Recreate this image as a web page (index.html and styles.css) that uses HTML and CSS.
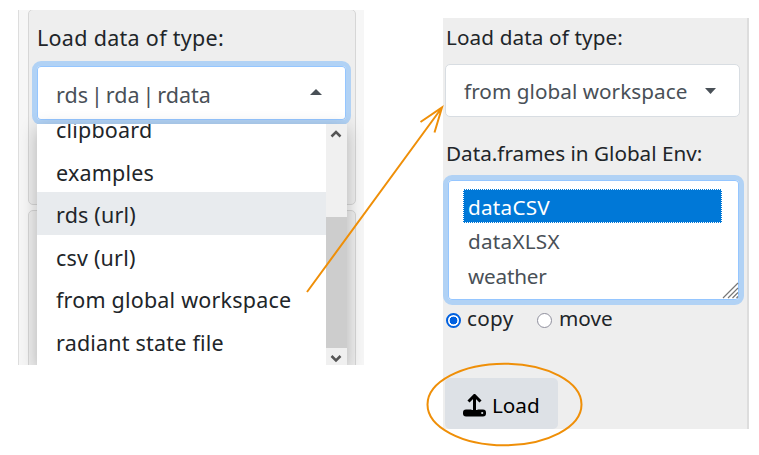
FILE: index.html
```html
<!DOCTYPE html>
<html lang="en">
<head>
<meta charset="utf-8">
<title>Load data</title>
<link rel="stylesheet" href="styles.css">
</head>
<body>
<main class="stage">
  <section class="source">
    <div class="well well-top">
      <div class="label"><span>Load data of type:</span></div>
      <div class="select focused">
        <span>rds | rda | rdata</span>
        <svg class="caret" width="12" height="6" viewBox="0 0 12 6"><path d="M0 6 6 0l6 6z"/></svg>
      </div>
    </div>
    <div class="well well-bottom"></div>
    <div class="menu">
      <ul class="options">
        <li><span>clipboard</span></li>
        <li><span>examples</span></li>
        <li class="active"><span>rds (url)</span></li>
        <li><span>csv (url)</span></li>
        <li><span>from global workspace</span></li>
        <li><span>radiant state file</span></li>
      </ul>
      <div class="scrollbar">
        <svg class="up" width="20" height="20" viewBox="0 0 20 20"><path d="m5.500 12.500 4.500-4.500 4.500 4.500"/></svg>
        <div class="thumb"></div>
        <svg width="20" height="17" viewBox="0 0 20 17"><path d="m5.500 8 4.500 4.500L14.500 8"/></svg>
      </div>
    </div>
  </section>
  <section class="target">
    <div class="label"><span>Load data of type:</span></div>
    <div class="select">
      <span>from global workspace</span>
      <svg class="caret" width="11" height="6" viewBox="0 0 11 6"><path d="M0 0h11L5.500 6z"/></svg>
    </div>
    <div class="label frames"><span>Data.frames in Global Env:</span></div>
    <div class="listbox">
      <div class="item selected"><span>dataCSV</span></div>
      <div class="item"><span>dataXLSX</span></div>
      <div class="item weather"><span>weather</span></div>
      <svg class="grip" width="17" height="17" viewBox="0 0 17 17"><path d="M1 16 16 1M6 16 16 6M10.500 16 16 10.500M14.500 16l1.500-1.500"/></svg>
    </div>
    <div class="radios">
      <i class="radio on"></i><span class="copy">copy</span>
      <i class="radio"></i><span class="move">move</span>
    </div>
    <div class="load">
      <svg width="23" height="23" viewBox="0 0 23 23"><rect x="0" y="15.500" width="23" height="7" rx="3"/><path class="halo" d="M11.500 16V4"/><path class="arrow" d="M11.500 17.500V2M5.500 7.500l6-6 6 6"/><circle cx="19.200" cy="19" r="1.100"/></svg>
      <span>Load</span>
    </div>
  </section>
  <svg class="notes" width="759" height="455" viewBox="0 0 759 455">
    <path d="M307 292 442 107.500M420.500 122 442 107.500 434.500 132.500"/>
    <ellipse cx="504.500" cy="404.500" rx="77" ry="40.800"/>
  </svg>
</main>
</body>
</html>
```
FILE: styles.css
```css
* { box-sizing: border-box; }
body { margin: 0; background: #fff; font-family: "Noto Sans", "Open Sans", sans-serif; color: #212529; white-space: nowrap; }
svg { display: block; flex: none; }
.stage { position: relative; display: flex; align-items: flex-start; gap: 79px; width: 759px; height: 455px; padding-left: 18px; overflow: hidden; }

.source { position: relative; width: 346px; height: 355px; margin-top: 10px; padding: 0 8px 0 9px; overflow: hidden; background: #f6f6f6; border-left: 1px solid #ddd; font-size: 21.500px; letter-spacing: 0.200px; }
.well { background: #eee; border: 1.500px solid #d6d6d6; border-radius: 5px; }
.well-top { height: 196px; margin-top: -1px; padding: 0 4px 0 3px; }
.well-bottom { height: 170px; margin-top: 5px; }
.source .label { height: 51px; padding-left: 5px; line-height: 55px; letter-spacing: 0.300px; }
.select { display: flex; align-items: center; justify-content: space-between; background: #fff; color: #495057; }
.caret { fill: #495057; }
.focused { height: 64px; padding: 2px 24px 0 19px; border: 5px solid #b1d2f5; border-radius: 9px; box-shadow: inset 0 0 0 1px #95c6ff; letter-spacing: 0; word-spacing: -2.600px; }
.focused .caret { margin-bottom: 5px; }

.menu { position: absolute; left: 18px; top: 114px; display: flex; width: 310px; height: 241px; overflow: hidden; background: #fff; box-shadow: 0 5px 16px rgba(0, 0, 0, .25); }
.options { flex: 1; margin: -17px 0 0; padding: 0; list-style: none; }
.options li { height: 42.600px; padding-left: 19px; line-height: 46.500px; }
.options .active { background: #e8ebee; }
.scrollbar { display: flex; flex-direction: column; width: 21px; background: #f0f0f0; }
.scrollbar path { fill: none; stroke: #555; stroke-width: 2.500; }
.scrollbar .up { margin-bottom: 73px; }
.thumb { height: 131px; background: #cdcdcd; }

.target { width: 306px; height: 411px; margin-top: 18px; padding: 0 7px 0 2px; background: #eee; border-right: 2px solid #ddd; font-size: 20.700px; }
.target .label { height: 46px; padding-left: 1px; line-height: 39px; letter-spacing: 0.120px; }
.target .select { height: 53px; padding: 0 23px 0 18px; border: 1px solid #d8dde2; border-radius: 5px; letter-spacing: 0.050px; }
.target .frames { height: 58px; line-height: 72px; letter-spacing: 0; }
.listbox { position: relative; width: 301px; height: 130px; margin-left: -2px; padding: 9px 17px 0 15px; background: #fff; border: 5px solid #b1d2f5; border-radius: 9px; box-shadow: inset 0 0 0 1px #95c6ff; color: #495057; }
.item { height: 34.300px; padding-left: 5px; line-height: 36px; letter-spacing: 0.250px; }
.weather { letter-spacing: -0.200px; }
.selected { background: #0078d7; color: #fff; outline: 1px dotted #fff; outline-offset: -1px; }
.grip { position: absolute; right: 0; bottom: 1px; fill: none; stroke: #777; stroke-width: 1.200; }
.radios { display: flex; align-items: center; height: 30px; padding-left: 1px; }
.radio { width: 15px; height: 15px; border: 1.500px solid #8f8f9d; border-radius: 50%; background: #fff; }
.on { border: 2px solid #0060df; background: radial-gradient(circle, #0060df 0 3.600px, #fff 4.200px); }
.copy { width: 76px; padding-left: 6px; letter-spacing: 0.300px; }
.move { padding-left: 7px; }
.copy, .move { margin-top: -5px; }
.load { display: flex; align-items: center; gap: 6px; width: 113px; height: 51px; margin-top: 43px; padding: 4px 0 0 18px; border-radius: 5px; background: #dde1e6; color: #000; }
.load span { margin-top: -2px; }
.load path { fill: none; stroke: #000; stroke-width: 3; }
.load .halo { stroke: #dde1e6; stroke-width: 6; }
.load circle { fill: #dde1e6; }
.notes { position: absolute; left: 0; top: 0; fill: none; stroke: #ef8f08; stroke-width: 2; }
```
